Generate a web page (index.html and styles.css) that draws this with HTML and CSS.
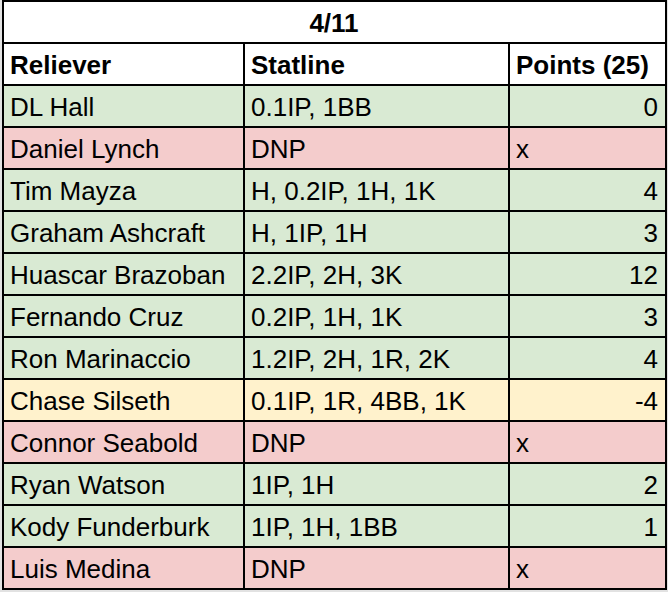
FILE: index.html
```html
<!DOCTYPE html>
<html>
<head>
<meta charset="utf-8">
<link rel="stylesheet" href="styles.css">
</head>
<body>
<div class="sheet">
<table class="grid">
  <colgroup>
    <col class="c1">
    <col class="c2">
    <col class="c3">
  </colgroup>
  <tr><td class="title" colspan="3">4/11</td></tr>
  <tr class="head"><td>Reliever</td><td>Statline</td><td>Points (25)</td></tr>
  <tr class="g"><td>DL Hall</td><td>0.1IP, 1BB</td><td class="num">0</td></tr>
  <tr class="r"><td>Daniel Lynch</td><td>DNP</td><td>x</td></tr>
  <tr class="g"><td>Tim Mayza</td><td>H, 0.2IP, 1H, 1K</td><td class="num">4</td></tr>
  <tr class="g"><td>Graham Ashcraft</td><td>H, 1IP, 1H</td><td class="num">3</td></tr>
  <tr class="g"><td>Huascar Brazoban</td><td>2.2IP, 2H, 3K</td><td class="num">12</td></tr>
  <tr class="g"><td>Fernando Cruz</td><td>0.2IP, 1H, 1K</td><td class="num">3</td></tr>
  <tr class="g"><td>Ron Marinaccio</td><td>1.2IP, 2H, 1R, 2K</td><td class="num">4</td></tr>
  <tr class="y"><td>Chase Silseth</td><td>0.1IP, 1R, 4BB, 1K</td><td class="num">-4</td></tr>
  <tr class="r"><td>Connor Seabold</td><td>DNP</td><td>x</td></tr>
  <tr class="g"><td>Ryan Watson</td><td>1IP, 1H</td><td class="num">2</td></tr>
  <tr class="g"><td>Kody Funderburk</td><td>1IP, 1H, 1BB</td><td class="num">1</td></tr>
  <tr class="r"><td>Luis Medina</td><td>DNP</td><td>x</td></tr>
</table>
</div>
</body>
</html>
```
FILE: styles.css
```css
html, body {
  margin: 0;
  padding: 0;
  background: #e2e2e2;
}
.sheet {
  padding-left: 2px;
  width: 666px;
}
.grid {
  border-collapse: collapse;
  table-layout: fixed;
  width: 665px;
  background: #ffffff;
  font-family: "Liberation Sans", Arial, sans-serif;
  font-size: 26px;
  color: #000;
}
.c1 { width: 241px; }
.c2 { width: 265px; }
.c3 { width: 157px; }
.grid td {
  border: 2px solid #000;
  height: 42px;
  padding: 0 7px 4px 6px;
  line-height: 29px;
  vertical-align: bottom;
  white-space: nowrap;
  overflow: hidden;
  box-sizing: border-box;
}
.grid td.title {
  text-align: center;
  font-weight: bold;
}
.head td { font-weight: bold; background: #fff; }
.g td { background: #d9ead3; }
.r td { background: #f4cccc; }
.y td { background: #fff2cc; }
.grid td.num { text-align: right; }
```
